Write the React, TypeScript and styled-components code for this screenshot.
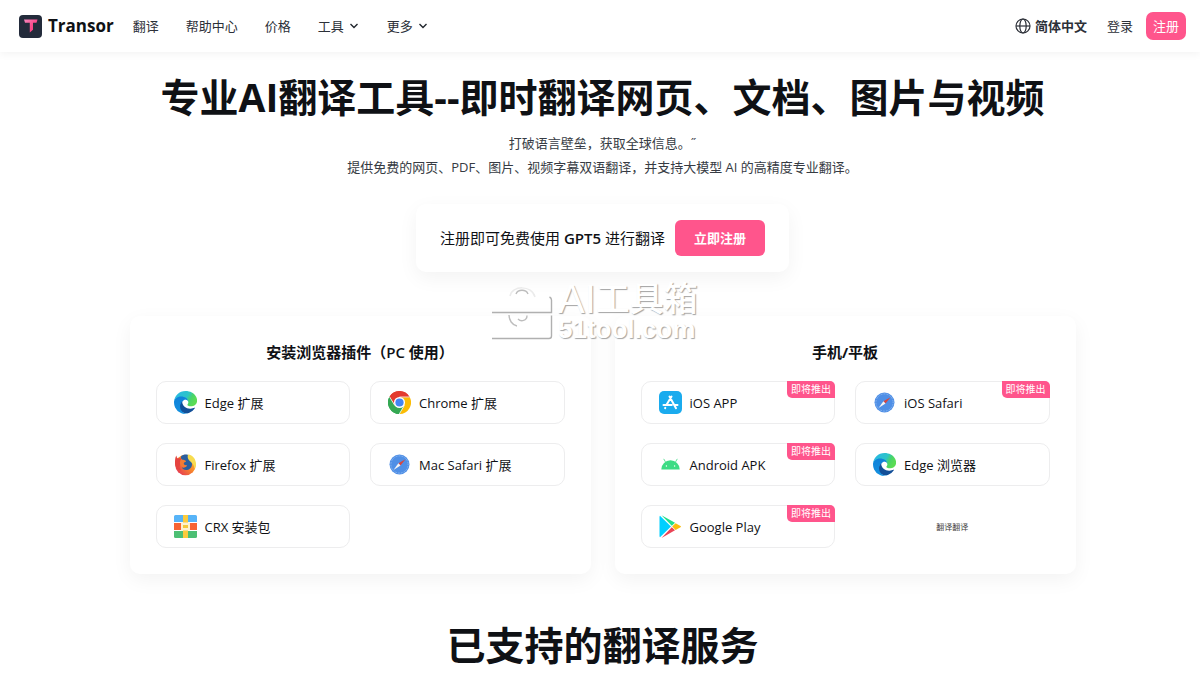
import React from 'react';
import styled, { createGlobalStyle } from 'styled-components';

const pink = '#ff558c';
const ink = '#0f1115';

const GlobalStyle = createGlobalStyle`
  *, *::before, *::after { box-sizing: border-box; }
  body {
    margin: 0;
    background: #fff;
    color: ${ink};
    font-family: 'Open Sans', 'Noto Sans CJK SC', sans-serif;
    font-size: 13px;
    overflow-x: hidden;
  }
  h1, h2, h3, p, ul { margin: 0; padding: 0; }
  ul { list-style: none; }
  a { color: inherit; text-decoration: none; }
  button { font-family: inherit; border: 0; padding: 0; background: none; color: inherit; cursor: pointer; }
`;

const Header = styled.header`
  display: flex;
  align-items: center;
  justify-content: space-between;
  height: 52px;
  padding: 0 14px 0 19px;
  box-shadow: 0 2px 8px rgba(0, 0, 0, 0.05);
`;

const Group = styled.div<{ $gap: number }>`
  display: flex;
  align-items: center;
  gap: ${(p) => p.$gap}px;
`;

const Brand = styled.a`
  display: flex;
  align-items: center;
  gap: 6px;
  font-size: 17px;
  line-height: 24px;
  font-weight: 700;
`;

const Nav = styled.nav`
  display: flex;
  align-items: center;
  gap: 27px;
`;

const NavLink = styled.a`
  font-size: 13px;
  line-height: 20px;
  color: #2c3038;
`;

const MenuButton = styled.button<{ $bold?: boolean }>`
  display: flex;
  align-items: center;
  gap: 4px;
  font-size: 13px;
  line-height: 20px;
  font-weight: ${(p) => (p.$bold ? 700 : 400)};
  color: #2c3038;
`;

const RegisterButton = styled.button`
  height: 28px;
  padding: 0 7px;
  border-radius: 7px;
  background: ${pink};
  color: #fff;
  font-size: 13px;
  line-height: 20px;
`;

const Main = styled.main`
  position: relative;
  display: flex;
  flex-direction: column;
  align-items: center;
  padding: 20px 14px 0 19px;
`;

const Title = styled.h1`
  font-size: 39px;
  line-height: 50px;
  font-weight: 700;
  text-align: center;
`;

const SectionTitle = styled(Title).attrs({ as: 'h2' })`
  margin-top: 46px;
`;

const Lead = styled.p`
  margin-top: 9px;
  font-size: 13px;
  line-height: 24px;
  color: #363b43;
  text-align: center;
`;

const softCard = `
  background: #fff;
  border-radius: 10px;
  box-shadow: 0 6px 20px rgba(0, 0, 0, 0.05);
`;

const Promo = styled.section`
  ${softCard}
  display: flex;
  align-items: center;
  gap: 10px;
  margin-top: 25px;
  padding: 16px 24px;
  font-size: 15px;
  line-height: 20px;
`;

const Latin = styled.span`
  font-weight: 600;
`;

const PromoButton = styled.button`
  height: 36px;
  padding: 0 19px;
  border-radius: 6px;
  background: ${pink};
  color: #fff;
  font-size: 13px;
  line-height: 20px;
  font-weight: 700;
`;

const Panels = styled.div`
  display: grid;
  grid-template-columns: 1fr 1fr;
  gap: 24px;
  width: 100%;
  max-width: 946px;
  margin-top: 44px;
`;

const Panel = styled.section`
  ${softCard}
  padding: 26px;
`;

const PanelTitle = styled.h3`
  font-size: 15px;
  line-height: 20px;
  font-weight: 700;
  text-align: center;
`;

const Options = styled.ul`
  display: grid;
  grid-template-columns: 1fr 1fr;
  gap: 19px 20px;
  margin-top: 19px;
`;

const Option = styled.a`
  position: relative;
  display: flex;
  align-items: center;
  gap: 8px;
  height: 43px;
  padding: 0 17px;
  border: 1px solid #ededee;
  border-radius: 10px;
  font-size: 13px;
  line-height: 20px;
  svg { flex: none; }
`;

const Badge = styled.span`
  position: absolute;
  top: -1px;
  right: -1px;
  padding: 0 4px;
  border-radius: 0 5px 0 5px;
  background: ${pink};
  color: #fff;
  font-size: 10px;
  line-height: 17px;
`;

const Tiny = styled.li`
  display: flex;
  align-items: center;
  justify-content: center;
  font-size: 8px;
  line-height: 10px;
  color: #444;
`;

const Watermark = styled.div`
  position: absolute;
  top: 229px;
  left: 50%;
  margin-left: -109px;
  display: flex;
  align-items: center;
  gap: 5px;
  color: #fff;
  font-family: 'Liberation Sans', 'Noto Sans CJK SC', sans-serif;
  text-shadow: 1px 1px 1px rgba(0, 0, 0, 0.36);
  white-space: nowrap;
  pointer-events: none;
`;

const MarkName = styled.div`
  display: flex;
  align-items: center;
  font-size: 34px;
  line-height: 36px;
  font-weight: 500;
`;

const MarkLatin = styled.span`
  font-size: 40px;
`;

const MarkSite = styled.div`
  font-size: 26px;
  line-height: 24px;
  font-weight: 700;
`;

const LogoIcon = () => (
  <svg width="23" height="23" viewBox="0 0 23 23" aria-hidden="true">
    <defs>
      <linearGradient id="tg" x1="0" y1="0" x2="1" y2="1">
        <stop offset="0" stopColor="#f48ac0" />
        <stop offset="0.500" stopColor="#fb4d8d" />
        <stop offset="1" stopColor="#fb3d7d" />
      </linearGradient>
    </defs>
    <rect width="23" height="23" rx="4" fill="#232b3b" />
    <path d="M5 4.500h13.500l-1 3.200h-3.500v7l-3.200 2.800v-9.800H6z" fill="url(#tg)" />
  </svg>
);

const Chevron = () => (
  <svg width="12" height="12" viewBox="0 0 12 12" fill="none" stroke="#22262d" strokeWidth="1.400" aria-hidden="true">
    <path d="M2.500 4 6 7.500 9.500 4" />
  </svg>
);

const Globe = () => (
  <svg width="16" height="16" viewBox="0 0 16 16" fill="none" stroke="#2c3038" strokeWidth="1.200" aria-hidden="true">
    <circle cx="8" cy="8" r="7" />
    <ellipse cx="8" cy="8" rx="3.200" ry="7" />
    <path d="M1 8h14" />
  </svg>
);

const EdgeIcon = () => (
  <svg width="23" height="23" viewBox="0 0 256 256" aria-hidden="true">
    <defs>
      <linearGradient id="ea" x1="0" y1="0" x2="0" y2="1">
        <stop offset="0" stopColor="#0f7fd8" />
        <stop offset="1" stopColor="#1492e0" />
      </linearGradient>
      <linearGradient id="eb" x1="0" y1="0" x2="1" y2="0.400">
        <stop offset="0" stopColor="#29b6ea" />
        <stop offset="0.600" stopColor="#2cc4c8" />
        <stop offset="0.800" stopColor="#48d468" />
        <stop offset="1" stopColor="#5bdc55" />
      </linearGradient>
    </defs>
    <path fill="#124f98" d="M226.400 185.500c-3.400 1.800-6.900 3.400-10.500 4.700a101.700 101.700 0 0 1-35.800 6.500c-47.200 0-88.300-32.500-88.300-74.100a31.500 31.500 0 0 1 16.400-27.300c-42.700 1.800-53.600 46.300-53.600 72.300 0 73.700 67.900 81.100 82.500 81.100 7.900 0 19.800-2.300 27-4.500l1.300-.5a128.200 128.200 0 0 0 66.600-52.700 4 4 0 0 0-5.600-5.500z" />
    <path fill="url(#ea)" d="M105.700 241.300A79.200 79.200 0 0 1 83 220a80.700 80.700 0 0 1 29.500-120c3.200-1.500 8.500-4.100 15.600-4a32.400 32.400 0 0 1 25.700 13 31.900 31.900 0 0 1 6.300 18.700c0-.2 24.500-79.600-80-79.600-43.900 0-80 41.700-80 78.200a130.200 130.200 0 0 0 12.100 56 128 128 0 0 0 156.400 67 75.600 75.600 0 0 1-62.900-8z" />
    <path fill="url(#eb)" d="M152.300 148.800c-.8 1-3.300 2.500-3.300 5.700 0 2.600 1.700 5.200 4.800 7.300 14.600 10.100 42 8.800 42.100 8.800a60.300 60.300 0 0 0 30.700-8.500 62 62 0 0 0 30.800-53.500c.3-22.400-8-37.300-11.300-43.900C224.900 23.800 179.200 0 128 0A128 128 0 0 0 0 126.200c.5-36.500 36.800-66 80-66 3.500 0 23.500.3 42 10a72.600 72.600 0 0 1 30.900 29.300c6.100 10.600 7.200 24 7.200 29.400s-2.700 13.300-7.800 19.900z" />
  </svg>
);

const ChromeIcon = () => (
  <svg width="23" height="23" viewBox="0 0 48 48" aria-hidden="true">
    <path fill="#e33b2e" d="M24 24 3.200 12A24 24 0 0 1 44.800 12z" />
    <path fill="#34a853" d="M24 24 24 48A24 24 0 0 1 3.200 12L13.600 30z" />
    <path fill="#fbbc05" d="M24 24 34.400 30 24 48A24 24 0 0 0 44.800 12H24z" />
    <path fill="#e33b2e" d="M24 13h20.800A24 24 0 0 0 3.200 12l11.300 18z" />
    <path fill="#34a853" d="M3.200 12A24 24 0 0 0 24 48l10-18H13.600z" />
    <path stroke="#fff" strokeWidth="1.600" fill="none" d="M24 12.500h21M14 30 3.200 12M34 30 23.500 48" />
    <circle cx="24" cy="24" r="11.500" fill="#fff" />
    <circle cx="24" cy="24" r="8.600" fill="#4285f4" />
  </svg>
);

const FirefoxIcon = () => (
  <svg width="23" height="23" viewBox="0 0 46 46" aria-hidden="true">
    <defs>
      <linearGradient id="ff" x1="1" y1="0" x2="0" y2="1">
        <stop offset="0" stopColor="#fbc33c" />
        <stop offset="0.450" stopColor="#f98b2a" />
        <stop offset="1" stopColor="#e0245e" />
      </linearGradient>
    </defs>
    <circle cx="23" cy="24" r="20.500" fill="url(#ff)" />
    <path fill="#e5433f" d="M5 5c0 3 1 5 3 6 3-1 6-1 8 0-4 3-5 7-3 11-3 4-2 10 2 13-8 0-13-7-13-14C2 14 2 9 5 5z" />
    <path fill="#2b5f9f" d="M14 7c5-5 13-5 17-1 0 6 5 9 5 16 0 8-6 12-12 12-4 0-7-2-8-5 5 1 9-1 10-4-4 0-7-1-7-4 1-2 3-3 5-4-2-2-5-3-7-3-2-2-4-4-3-7z" />
    <path fill="#f7dc50" d="M28 3c10 1 16 9 16 20 0 3-1 6-3 9 0-6-3-10-7-14-5-4-8-8-6-15z" />
    <path fill="#f47b35" d="M12 17c2-3 5-4 8-3l4 2c-2 2-5 2-5 5 0 2 4 4 7 4-2 3-6 4-9 3-4-2-6-7-5-11z" />
  </svg>
);

const SafariIcon = () => (
  <svg width="23" height="23" viewBox="0 0 23 23" aria-hidden="true">
    <circle cx="11.500" cy="11.500" r="10" fill="#4f8fe6" />
    <circle cx="11.500" cy="11.500" r="8.600" fill="none" stroke="#a9cdf7" strokeWidth="1" strokeDasharray="0.600 1" />
    <path d="M17.500 6.200 10.400 10.200l2.100 2.400z" fill="#d8463f" />
    <path d="M5.500 17 10.400 10.200l2.100 2.400z" fill="#f4f4f6" />
  </svg>
);

const CrxIcon = () => (
  <svg width="23" height="23" viewBox="0 0 23 23" aria-hidden="true">
    <path d="M1.500 0h20a1.500 1.500 0 0 1 1.500 1.500V7H0V1.500A1.500 1.500 0 0 1 1.500 0z" fill="#57b4f8" />
    <path d="M0 8h23v7H0z" fill="#f76434" />
    <path d="M0 16h23v5.500a1.500 1.500 0 0 1-1.500 1.500h-20A1.500 1.500 0 0 1 0 21.500z" fill="#4cbf74" />
    <path d="M9 0h5v23H9z" fill="#fbcb3d" />
    <rect x="7" y="7.500" width="9" height="8" rx="0.800" fill="#fdf1d0" />
    <path d="M9 10h5v3H9z" fill="#f4c93c" />
  </svg>
);

const AppStoreIcon = () => (
  <svg width="23" height="23" viewBox="0 0 23 23" aria-hidden="true">
    <rect width="23" height="23" rx="5" fill="#1aabee" />
    <g fill="none" stroke="#fff" strokeWidth="2" strokeLinecap="round">
      <path d="M12.500 5.500 7.400 14M10.500 5.500l6.500 11.700M4.500 14h8.300M16.200 14h2.300M6.100 17.200l.2-.4" />
    </g>
  </svg>
);

const AndroidIcon = () => (
  <svg width="23" height="23" viewBox="0 0 23 23" aria-hidden="true">
    <path d="M2.300 16.500a9.200 9.200 0 0 1 18.400 0z" fill="#3ddc84" />
    <path d="m6.800 9.500-1.900-3.300M16.200 9.500l1.900-3.300" stroke="#3ddc84" strokeWidth="0.800" strokeLinecap="round" />
    <circle cx="7.400" cy="13" r="0.700" fill="#fff" />
    <circle cx="15.600" cy="13" r="0.700" fill="#fff" />
  </svg>
);

const PlayIcon = () => (
  <svg width="23" height="23" viewBox="0 0 23 23" aria-hidden="true">
    <path d="M1 .8 12 11.500 1 22.300Q.5 21.900.5 21V2Q.5 1.200 1 .8z" fill="#00cfff" />
    <path d="M2.500.2 16 7.800l-3.200 3z" fill="#1fe08a" />
    <path d="M16.600 8.200 21.500 11q1 .6 0 1.200l-4.900 2.700-3.400-3.400z" fill="#fbbd0c" />
    <path d="M12.800 12.200 16 15.200 2.500 22.900z" fill="#ea4456" />
  </svg>
);

const ToolboxMark = () => (
  <svg width="62" height="58" viewBox="0 0 62 58" fill="none" aria-hidden="true">
    <g stroke="#b0b0b0" strokeWidth="1.400">
      <path d="M1 30.500h59.500V18q0-2-2-3" />
      <path d="M1 56.500h57q2.500 0 2.500-2.500V33.500" />
    </g>
    <path d="M19 14c2-11 22-11 25 1" stroke="#ebebeb" strokeWidth="1.500" />
    <path d="M25 12c2-5 10-5 12 0M18 33c0 5 3 10 8 11M27 37c3 3 9 2 9-3.500" stroke="#bdbdbd" strokeWidth="1.400" />
  </svg>
);

interface Item {
  label: string;
  icon: React.ReactNode;
  soon?: boolean;
}

const desktop: Item[] = [
  { label: 'Edge 扩展', icon: <EdgeIcon /> },
  { label: 'Chrome 扩展', icon: <ChromeIcon /> },
  { label: 'Firefox 扩展', icon: <FirefoxIcon /> },
  { label: 'Mac Safari 扩展', icon: <SafariIcon /> },
  { label: 'CRX 安装包', icon: <CrxIcon /> },
];

const mobile: Item[] = [
  { label: 'iOS APP', icon: <AppStoreIcon />, soon: true },
  { label: 'iOS Safari', icon: <SafariIcon />, soon: true },
  { label: 'Android APK', icon: <AndroidIcon />, soon: true },
  { label: 'Edge 浏览器', icon: <EdgeIcon /> },
  { label: 'Google Play', icon: <PlayIcon />, soon: true },
];

const OptionItem = ({ label, icon, soon }: Item) => (
  <li>
    <Option href="#">
      {icon}
      {label}
      {soon && <Badge>即将推出</Badge>}
    </Option>
  </li>
);

export default function App() {
  return (
    <>
      <GlobalStyle />
      <Header>
        <Group $gap={19}>
          <Brand href="#">
            <LogoIcon />
            Transor
          </Brand>
          <Nav>
            <NavLink href="#">翻译</NavLink>
            <NavLink href="#">帮助中心</NavLink>
            <NavLink href="#">价格</NavLink>
            <MenuButton>工具<Chevron /></MenuButton>
            <MenuButton>更多<Chevron /></MenuButton>
          </Nav>
        </Group>
        <Group $gap={20}>
          <MenuButton $bold><Globe />简体中文</MenuButton>
          <Group $gap={13}>
            <NavLink href="#">登录</NavLink>
            <RegisterButton>注册</RegisterButton>
          </Group>
        </Group>
      </Header>
      <Main>
        <Title>专业AI翻译工具--即时翻译网页、文档、图片与视频</Title>
        <Lead>
          打破语言壁垒，获取全球信息。˝
          <br />
          提供免费的网页、PDF、图片、视频字幕双语翻译，并支持大模型 AI 的高精度专业翻译。
        </Lead>
        <Promo>
          <p>注册即可免费使用 <Latin>GPT5</Latin> 进行翻译</p>
          <PromoButton>立即注册</PromoButton>
        </Promo>
        <Panels>
          <Panel>
            <PanelTitle>安装浏览器插件（<Latin>PC</Latin> 使用）</PanelTitle>
            <Options>
              {desktop.map((item) => <OptionItem key={item.label} {...item} />)}
            </Options>
          </Panel>
          <Panel>
            <PanelTitle>手机/平板</PanelTitle>
            <Options>
              {mobile.map((item) => <OptionItem key={item.label} {...item} />)}
              <Tiny>翻译翻译</Tiny>
            </Options>
          </Panel>
        </Panels>
        <SectionTitle>已支持的翻译服务</SectionTitle>
        <Watermark>
          <ToolboxMark />
          <div>
            <MarkName><MarkLatin>AI</MarkLatin>工具箱</MarkName>
            <MarkSite>51tool.com</MarkSite>
          </div>
        </Watermark>
      </Main>
    </>
  );
}
